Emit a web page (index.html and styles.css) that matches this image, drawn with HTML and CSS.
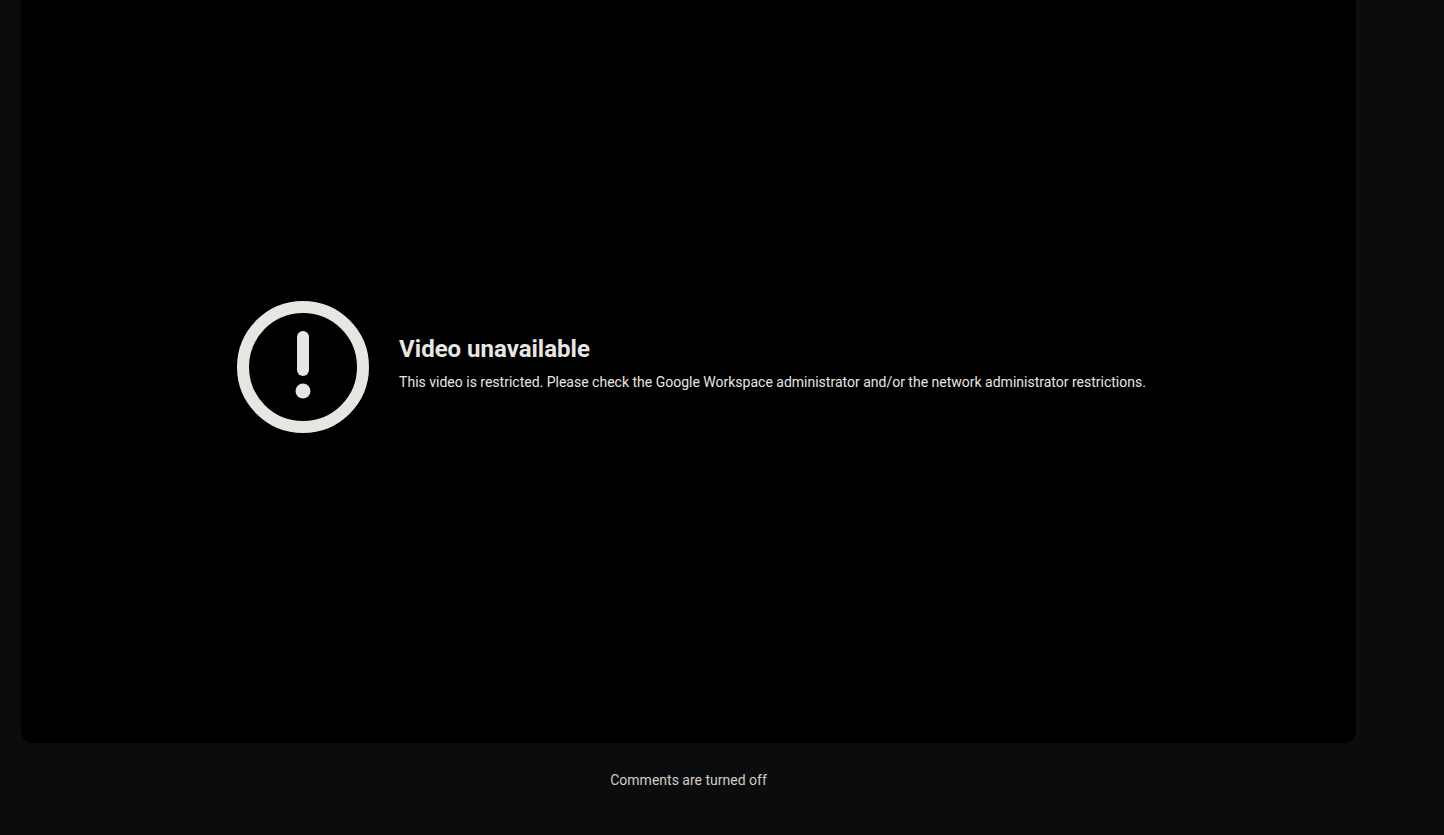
FILE: index.html
```html
<!DOCTYPE html>
<html lang="en">
<head>
<meta charset="utf-8">
<meta name="viewport" content="width=device-width, initial-scale=1">
<title>Video unavailable</title>
<link rel="stylesheet" href="styles.css">
</head>
<body>
<main class="watch">
  <section class="player" aria-label="Video player">
    <div class="error">
      <svg class="error-icon" viewBox="0 0 132 132" aria-hidden="true">
        <circle cx="66" cy="66" r="60" fill="none" stroke="currentColor" stroke-width="12"/>
        <path d="M66 36V69" fill="none" stroke="currentColor" stroke-width="12" stroke-linecap="round"/>
        <circle cx="66" cy="90" r="7.5" fill="currentColor"/>
      </svg>
      <div class="error-text">
        <h1 class="error-title">Video unavailable</h1>
        <p class="error-reason">This video is restricted. Please check the Google Workspace administrator and/or the network administrator restrictions.</p>
      </div>
    </div>
  </section>
  <p class="comments-message">Comments are turned off</p>
</main>
</body>
</html>
```
FILE: styles.css
```css
* {
  box-sizing: border-box;
}

body {
  margin: 0;
  background: #0b0c0d;
  color: #e8e6e3;
  font-family: Roboto, "Liberation Sans", sans-serif;
  font-size: 14px;
  line-height: 20px;
}

.watch {
  display: flex;
  flex-direction: column;
  min-height: 100vh;
  padding: 0 88px 46px 21px;
}

.player {
  display: flex;
  flex: 1;
  align-items: center;
  justify-content: center;
  padding: 0 24px 10px 30px;
  background: #000;
  border-radius: 0 0 12px 12px;
}

.error {
  display: flex;
  align-items: center;
  gap: 30px;
}

.error-icon {
  flex: none;
  width: 132px;
  height: 132px;
  color: #e8e6e3;
}

.error-text {
  padding-bottom: 8px;
}

.error-title {
  margin: 0 0 8px;
  font-size: 24px;
  font-weight: 700;
  line-height: 30px;
}

.error-reason {
  margin: 0;
}

.comments-message {
  margin: 28px 0 0;
  color: #d1cdc7;
  line-height: 18px;
  text-align: center;
}
```
